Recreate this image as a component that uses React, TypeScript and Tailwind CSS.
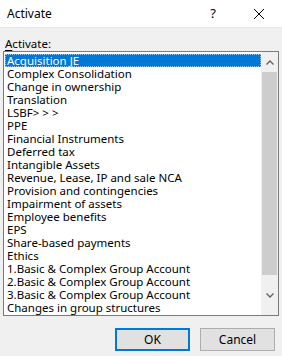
import React from "react";

const items = [
  "Acquisition JE",
  "Complex Consolidation",
  "Change in ownership",
  "Translation",
  "LSBF> > >",
  "PPE",
  "Financial Instruments",
  "Deferred tax",
  "Intangible Assets",
  "Revenue, Lease, IP and sale NCA",
  "Provision and contingencies",
  "Impairment of assets",
  "Employee benefits",
  "EPS",
  "Share-based payments",
  "Ethics",
  "1.Basic & Complex Group Account",
  "2.Basic & Complex Group Account",
  "3.Basic & Complex Group Account",
  "Changes in group structures",
];

export default function App() {
  return (
    <div
      className="w-[282px] h-[356px] bg-[#f0f0f0] flex flex-col text-[11.5px] text-black overflow-hidden"
      style={{ fontFamily: '"Noto Sans", "Open Sans", sans-serif' }}
    >
      <div className="h-[28px] bg-white flex items-center border-b border-[#e8e8e8] shrink-0">
        <span className="pl-[7px] leading-none text-[12px]">Activate</span>
        <span className="ml-auto w-[16px] text-center leading-none text-[13px] mr-[32px]">?</span>
        <svg width="12" height="12" viewBox="0 0 12 12" className="mr-[17px]">
          <path d="M1 1 L11 11 M11 1 L1 11" stroke="#000" strokeWidth="1" />
        </svg>
      </div>
      <div className="px-[3px] pt-[8px]">
        <div className="pl-[2px] h-[15px] leading-[15px]">
          <span className="underline underline-offset-2">A</span>ctivate:
        </div>
        <div className="h-[265px] border border-[#7a7a7a] bg-white flex overflow-hidden">
          <div className="flex-1 pt-[2px] pl-[1px] overflow-hidden">
            {items.map((it, i) => (
              <div
                key={it}
                className={
                  i === 0
                    ? "h-[13px] leading-[13px] pl-[2px] bg-[#0078d7] text-white outline-dotted outline-1 outline-[#99c9ef] -outline-offset-1 whitespace-nowrap"
                    : "h-[13px] leading-[13px] pl-[2px] whitespace-nowrap"
                }
              >
                {it}
              </div>
            ))}
          </div>
          <div className="w-[17px] bg-[#f0f0f0] flex flex-col shrink-0">
            <div className="h-[20px] flex items-center justify-center">
              <svg width="8" height="5" viewBox="0 0 8 5">
                <path d="M0.5 4.5 L4 1 L7.5 4.5" stroke="#606060" strokeWidth="1.3" fill="none" />
              </svg>
            </div>
            <div className="mx-[1px] h-[203px] bg-[#cdcdcd]" />
            <div className="flex-1 flex items-center justify-center">
              <svg width="8" height="5" viewBox="0 0 8 5">
                <path d="M0.5 0.5 L4 4 L7.5 0.5" stroke="#606060" strokeWidth="1.3" fill="none" />
              </svg>
            </div>
          </div>
        </div>
        <div className="flex justify-end gap-[10px] mt-[12px] pr-[4px]">
          <button className="w-[75px] h-[23px] bg-[#e1e1e1] border-2 border-[#0078d7] leading-none text-[12px]">OK</button>
          <button className="w-[75px] h-[23px] bg-[#e1e1e1] border border-[#adadad] leading-none text-[12px]">Cancel</button>
        </div>
      </div>
    </div>
  );
}
